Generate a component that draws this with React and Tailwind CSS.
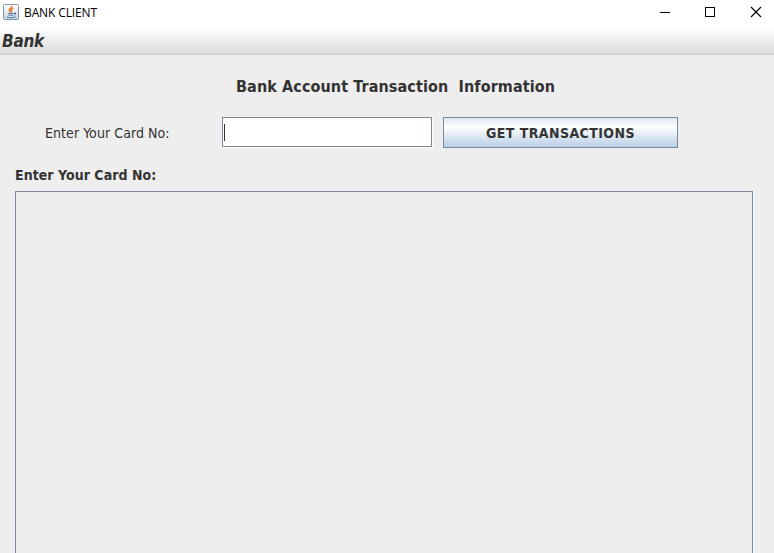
import React from "react";

const ui = "font-['DejaVu_Sans_Condensed','DejaVu_Sans',sans-serif] [font-stretch:condensed] whitespace-pre text-[#333333]";

function JavaIcon() {
  return (
    <svg width="16" height="16" viewBox="0 0 16 16" className="block">
      <defs>
        <linearGradient id="tile" x1="0" y1="0" x2="0" y2="1">
          <stop offset="0" stopColor="#ffffff" />
          <stop offset="1" stopColor="#c9d6e2" />
        </linearGradient>
      </defs>
      <rect x="0.5" y="0.5" width="15" height="15" rx="1" fill="url(#tile)" stroke="#8296a8" />
      <path d="M8.8 1.8C9.5 4 5.8 4.6 6.2 6.2C6.4 7 7.3 7.4 7.2 8.4M10.4 4.2C8.6 5 7.6 5.8 8.4 7.2C8.7 7.9 8.3 8.3 8 8.6" fill="none" stroke="#e8762c" strokeWidth="1.4" />
      <path d="M5 9.5H10.8M5.4 11.2H10.2M3.5 13C5.5 14 10 14 12.5 12.8M11 9.2C13 8.5 13.2 10.4 11.2 11" fill="none" stroke="#527a9f" strokeWidth="1.1" />
    </svg>
  );
}

function TitleBar() {
  return (
    <header className="flex h-7 items-start bg-white pl-[3px]">
      <div className="pt-1"><JavaIcon /></div>
      <span className="ml-[5px] mt-1 whitespace-pre font-['Open_Sans',sans-serif] text-[12px] leading-[18px] tracking-[-0.12px] text-black">BANK CLIENT</span>
      <svg width="108" height="24" viewBox="0 0 108 24" className="ml-auto mr-[8px]" shapeRendering="crispEdges">
        <path d="M2 12.5H12" stroke="#000" />
        <rect x="47.5" y="7.5" width="9" height="9" fill="none" stroke="#000" />
        <path d="M93 7L103 17M103 7L93 17" stroke="#000" shapeRendering="auto" strokeWidth="1.1" />
      </svg>
    </header>
  );
}

export default function App() {
  return (
    <div className="flex h-[553px] w-[774px] flex-col overflow-hidden bg-[#eeeeee]">
      <TitleBar />
      <nav className="flex h-[27px] shrink-0 border-b border-[#cccccc] bg-linear-to-b from-white to-[#dadada] pl-[2px]">
        <span className={`${ui} mt-[3px] text-[17px] leading-5 font-bold italic tracking-[-0.25px]`}>Bank</span>
      </nav>
      <h1 className={`${ui} ml-[236px] mt-[22px] h-5 text-[16px] leading-5 font-bold tracking-[0.1px]`}>Bank Account Transaction  Information</h1>
      <div className="mt-5 flex h-[31px] shrink-0">
        <label className={`${ui} ml-[45px] mt-[6px] w-[177px] text-[14px] leading-5 tracking-[0.07px]`}>Enter Your Card No:</label>
        <div className="h-[31px] w-[211px] border-r border-b border-white">
          <div className="flex h-[30px] w-[210px] border border-[#7a8a99] bg-white pt-[6px] pl-[1px]">
            <span className="h-[17px] w-px bg-[#333333]" />
          </div>
        </div>
        <button className={`${ui} ml-[10px] h-[31px] w-[235px] border border-[#7a8a99] bg-linear-to-b from-[#dde8f3] via-white via-30% to-[#b8cfe5] pt-px text-center text-[14px] leading-[29px] font-bold tracking-[0.42px]`}>GET TRANSACTIONS</button>
      </div>
      <h2 className={`${ui} ml-[15px] mt-[17px] h-5 text-[14px] leading-5 font-bold tracking-[0.05px]`}>Enter Your Card No:</h2>
      <div className="ml-[15px] mt-[6px] w-[739px] flex-1 border-r border-white">
        <div className="h-full w-[738px] border-x border-t border-[#7a8a99]" />
      </div>
    </div>
  );
}
